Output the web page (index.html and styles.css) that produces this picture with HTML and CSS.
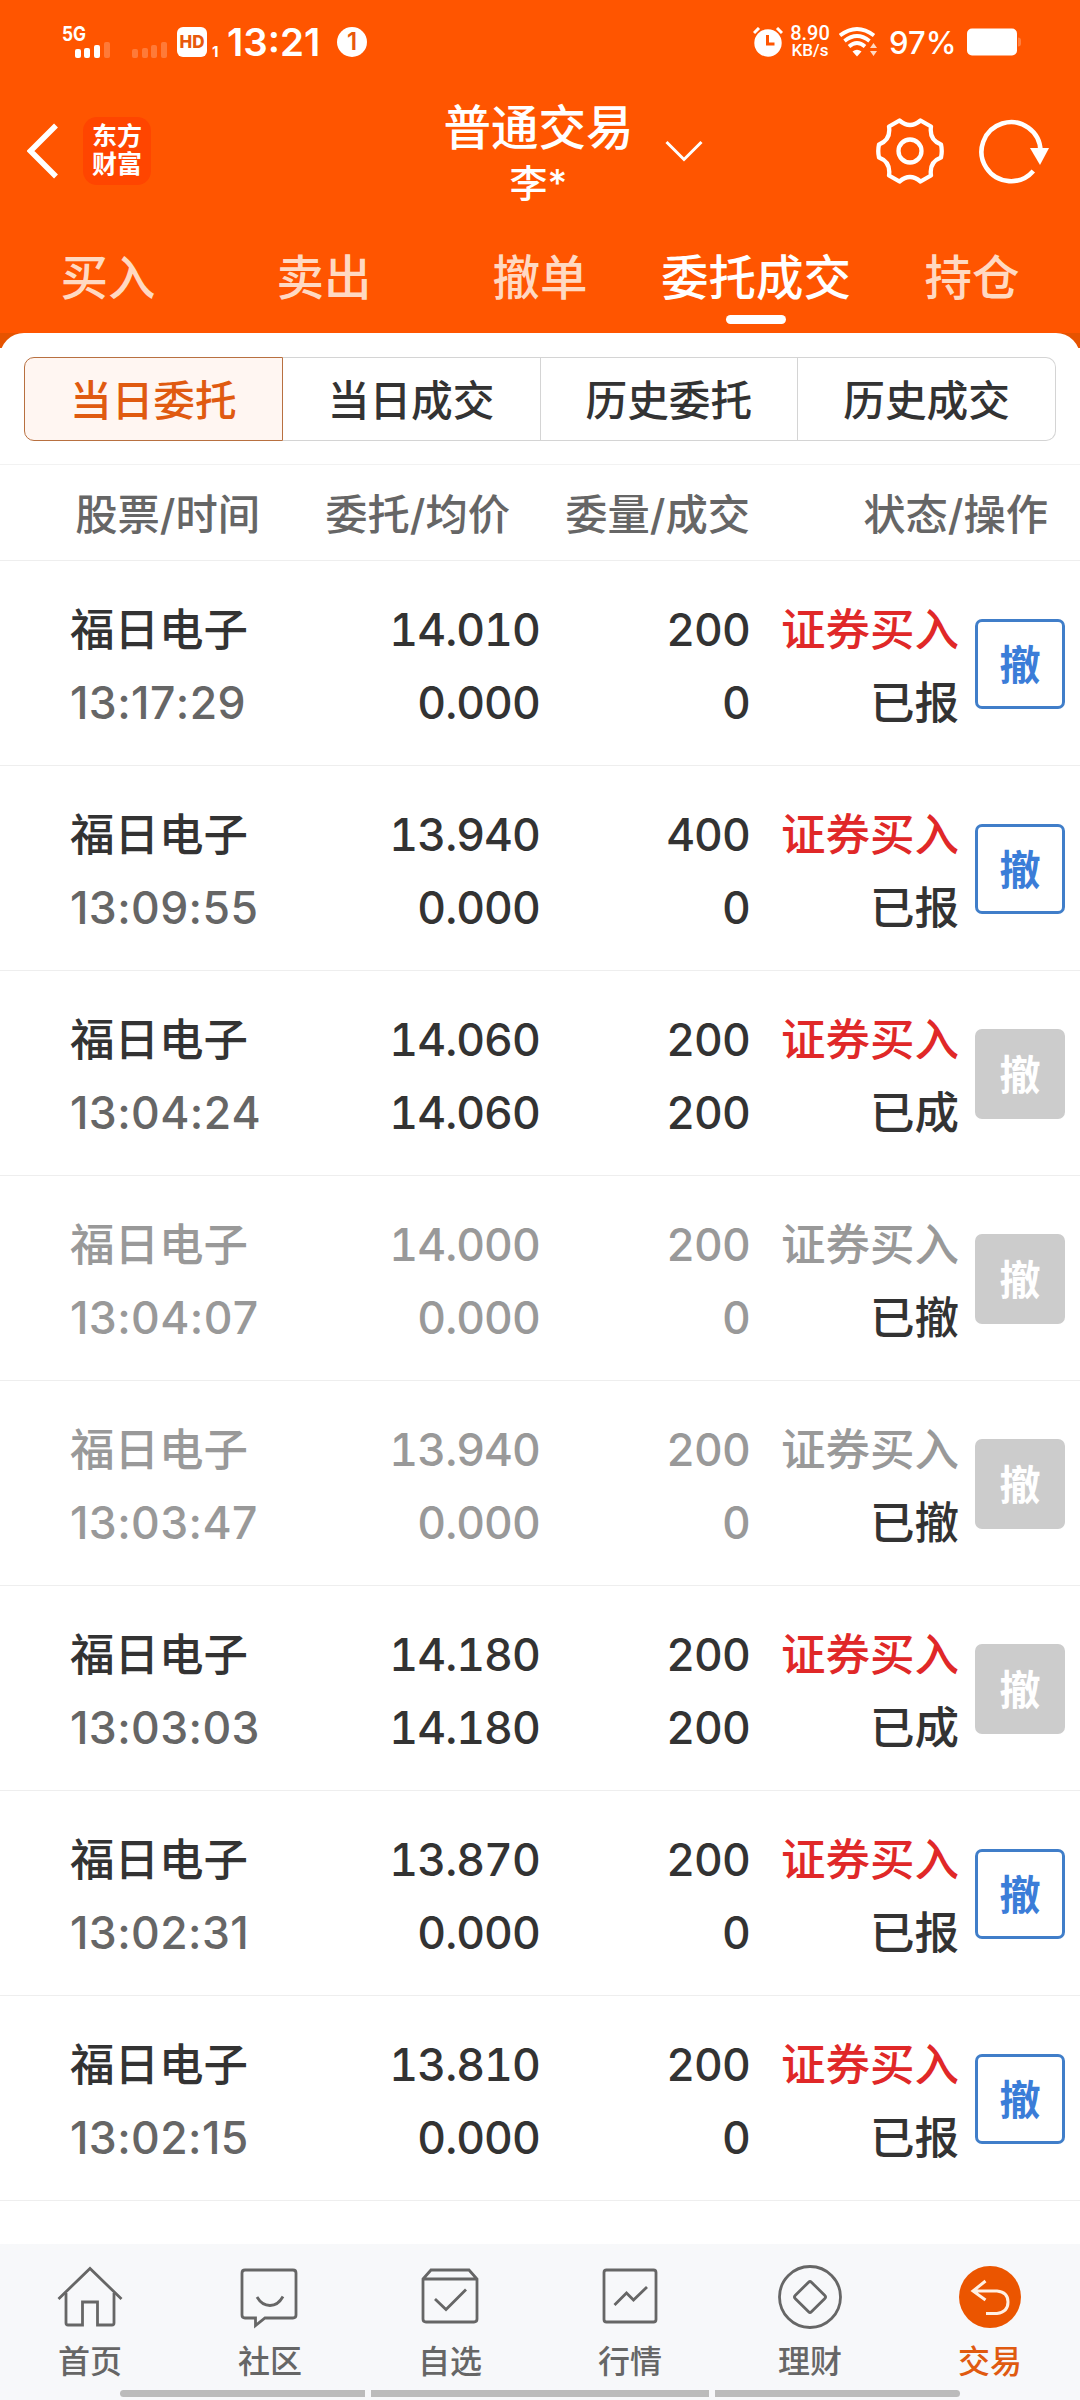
FILE: index.html
```html
<!DOCTYPE html>
<html lang="zh-CN">
    <head>
        <meta charset="utf-8">
        <title>普通交易</title>
        <link rel="stylesheet" href="styles.css">
    </head>
    <body>
        <header class="top">
            <div class="status-bar">
                <svg class="signal" width="110" height="36" viewBox="0 0 110 36">
                    <text class="net" x="0" y="17" textLength="24" lengthAdjust="spacingAndGlyphs">5G</text>
                    <g fill="#fff">
                        <rect x="13" y="25" width="6" height="9" rx="2"/>
                        <rect x="22" y="24" width="6" height="10" rx="2"/>
                        <rect x="32" y="21" width="6" height="13" rx="2"/>
                        <g opacity=".22">
                            <rect x="42" y="18" width="6" height="16" rx="2"/>
                            <rect x="70" y="25" width="6" height="9" rx="2"/>
                            <rect x="80" y="24" width="6" height="10" rx="2"/>
                            <rect x="89" y="21" width="6" height="13" rx="2"/>
                            <rect x="99" y="18" width="6" height="16" rx="2"/>
                        </g>
                    </g>
                </svg>
                <span class="hd">HD</span>
                <span class="sim">1</span>
                <span class="clock">13:21</span>
                <span class="notice">1</span>

                <div class="status-right">
                    <svg width="30" height="30" viewBox="0 0 30 30">
                        <circle cx="15" cy="16" r="13.7" fill="#fff"/>
                        <path d="M1 6l5-5M29 6l-5-5" stroke="#fff" stroke-width="3"/>
                        <path d="M14.5 8v9h7" fill="none" stroke="#ff5500" stroke-width="3"/>
                    </svg>
                    <div class="speed"><span>8.90</span><span class="unit">KB/s</span></div>
                    <svg class="wifi" width="40" height="30" viewBox="0 0 40 30">
                        <g fill="none" stroke="#fff" stroke-width="3.8">
                            <path d="M1 8.500Q18 -4.500 35 8.500"/>
                            <path d="M5.500 14Q18 4 30.500 14"/>
                            <path d="M10 19.500Q18 12.500 26 19.500"/>
                        </g>
                        <path d="M13.500 24.500Q18 21 22.500 24.500L18 29.500z" fill="#fff"/>
                        <path d="M31 21l3.500-5 3.500 5zM31 24l3.500 5 3.500-5z" fill="#ffd9c2"/>
                    </svg>
                    <span class="percent">97%</span>
                    <svg width="54" height="28" viewBox="0 0 54 28">
                        <rect x="0" y="0.500" width="50" height="27" rx="5" fill="#fff"/>
                        <path d="M51 9.500q3 0 3 3v3q0 3-3 3z" fill="#fff" opacity=".25"/>
                    </svg>
                </div>
            </div>

            <div class="title-bar">
                <div class="side">
                    <svg width="32" height="56" viewBox="0 0 32 56">
                        <path d="M29 2.500L3.500 28 29 53.500" fill="none" stroke="#fff" stroke-width="5.500"/>
                    </svg>
                    <div class="logo">东方<br>财富</div>
                </div>
                <div class="title">
                    <div class="title-main">普通交易</div>
                    <div class="title-sub">李*</div>
                </div>
                <div class="side side-right">
                    <svg class="arrow-down" width="38" height="22" viewBox="0 0 38 22">
                        <path d="M1.500 2L19 19.500 36.500 2" fill="none" stroke="#fff" stroke-width="3"/>
                    </svg>
                    <svg width="68" height="66" viewBox="0 0 68 66">
                        <g fill="none" stroke="#fff" stroke-width="4.300" stroke-linejoin="round">
                            <path d="M23.500 2.500Q34 11.500 44.500 2.500L55 8.500Q53 22 65 26.500Q66.500 33 65 39.500Q53 44 55 57.500L44.500 63.500Q34 54.500 23.500 63.500L13 57.500Q15 44 3 39.500Q1.500 33 3 26.500Q15 22 13 8.500Z"/>
                            <circle cx="34" cy="33" r="11.500"/>
                        </g>
                    </svg>
                    <svg class="refresh" width="72" height="66" viewBox="0 0 72 66">
                        <path d="M55.300 53A29.500 29.500 0 1 1 62.500 33" fill="none" stroke="#fff" stroke-width="4.600"/>
                        <path d="M52 30h19L62 47z" fill="#fff"/>
                    </svg>
                </div>
            </div>

            <nav class="tabs">
                <a class="tab">买入</a>
                <a class="tab">卖出</a>
                <a class="tab">撤单</a>
                <a class="tab active">委托成交</a>
                <a class="tab">持仓</a>
            </nav>
        </header>

        <main class="content">
            <div class="panel">
                <div class="segments">
                    <div class="segment active">当日委托</div>
                    <div class="segment">当日成交</div>
                    <div class="segment">历史委托</div>
                    <div class="segment">历史成交</div>
                </div>
            </div>

            <div class="row head">
                <div>股票/时间</div>
                <div>委托/均价</div>
                <div>委量/成交</div>
                <div>状态/操作</div>
            </div>

            <div class="row">
                <div class="stock">福日电子<br><span class="time">13:17:29</span></div>
                <div class="num">14.010<br>0.000</div>
                <div class="num">200<br>0</div>
                <div class="state"><span class="buy">证券买入</span><br>已报</div>
                <button class="cancel">撤</button>
            </div>
            <div class="row">
                <div class="stock">福日电子<br><span class="time">13:09:55</span></div>
                <div class="num">13.940<br>0.000</div>
                <div class="num">400<br>0</div>
                <div class="state"><span class="buy">证券买入</span><br>已报</div>
                <button class="cancel">撤</button>
            </div>
            <div class="row">
                <div class="stock">福日电子<br><span class="time">13:04:24</span></div>
                <div class="num">14.060<br>14.060</div>
                <div class="num">200<br>200</div>
                <div class="state"><span class="buy">证券买入</span><br>已成</div>
                <button class="cancel" disabled>撤</button>
            </div>
            <div class="row revoked">
                <div class="stock">福日电子<br><span class="time">13:04:07</span></div>
                <div class="num">14.000<br>0.000</div>
                <div class="num">200<br>0</div>
                <div class="state"><span class="buy">证券买入</span><br>已撤</div>
                <button class="cancel" disabled>撤</button>
            </div>
            <div class="row revoked">
                <div class="stock">福日电子<br><span class="time">13:03:47</span></div>
                <div class="num">13.940<br>0.000</div>
                <div class="num">200<br>0</div>
                <div class="state"><span class="buy">证券买入</span><br>已撤</div>
                <button class="cancel" disabled>撤</button>
            </div>
            <div class="row">
                <div class="stock">福日电子<br><span class="time">13:03:03</span></div>
                <div class="num">14.180<br>14.180</div>
                <div class="num">200<br>200</div>
                <div class="state"><span class="buy">证券买入</span><br>已成</div>
                <button class="cancel" disabled>撤</button>
            </div>
            <div class="row">
                <div class="stock">福日电子<br><span class="time">13:02:31</span></div>
                <div class="num">13.870<br>0.000</div>
                <div class="num">200<br>0</div>
                <div class="state"><span class="buy">证券买入</span><br>已报</div>
                <button class="cancel">撤</button>
            </div>
            <div class="row">
                <div class="stock">福日电子<br><span class="time">13:02:15</span></div>
                <div class="num">13.810<br>0.000</div>
                <div class="num">200<br>0</div>
                <div class="state"><span class="buy">证券买入</span><br>已报</div>
                <button class="cancel">撤</button>
            </div>
        </main>

        <footer class="bottom">
            <nav class="menu">
                <a class="item">
                    <svg class="icon" viewBox="0 0 66 66">
                        <path d="M1.500 34L33 3.500 64.500 34"/>
                        <path d="M9 28v30q0 2 2 2h14.500V37h15v23H55q2 0 2-2V28"/>
                    </svg>
                    首页
                </a>
                <a class="item">
                    <svg class="icon" viewBox="0 0 66 66">
                        <path d="M8 5h48q3 0 3 3v42q0 3-3 3H28l-9.500 7.500V53H8q-3 0-3-3V8q0-3 3-3z"/>
                        <path d="M20 32q5 8.500 13 8.500T46 31.500"/>
                    </svg>
                    社区
                </a>
                <a class="item">
                    <svg class="icon" viewBox="0 0 66 66">
                        <path d="M6 14l8-9h38l8 9v40q0 3-3 3H9q-3 0-3-3zM6 14h54"/>
                        <path d="M18 34l11 10.500L49 24.500"/>
                    </svg>
                    自选
                </a>
                <a class="item">
                    <svg class="icon" viewBox="0 0 66 66">
                        <rect x="7" y="5" width="52" height="52" rx="2.500"/>
                        <path d="M17.500 40l12-12 7 7L50 22"/>
                    </svg>
                    行情
                </a>
                <a class="item">
                    <svg class="icon" viewBox="0 0 66 66">
                        <circle cx="33" cy="32" r="30.500"/>
                        <rect x="21.500" y="20.500" width="23" height="23" rx="2" transform="rotate(45 33 32)"/>
                    </svg>
                    理财
                </a>
                <a class="item active">
                    <svg class="icon" viewBox="0 0 66 66">
                        <circle class="disc" cx="33" cy="32" r="31"/>
                        <path class="back" d="M28.500 16L16 26l12.500 9M16 26h24q11 1 11 11t-11 11.500H29"/>
                    </svg>
                    交易
                </a>
            </nav>
            <div class="handles">
                <span class="handle first"></span>
                <span class="handle middle"></span>
                <span class="handle last"></span>
            </div>
        </footer>
    </body>
</html>
```

FILE: styles.css
```css
* {
    box-sizing: border-box;
}
body {
    margin: 0;
    width: 1080px;
    height: 2400px;
    display: flex;
    flex-direction: column;
    overflow: hidden;
    background: #fff;
    color: #333;
    font-family: Inter, "Noto Sans CJK SC", sans-serif;
    font-weight: 500;
}

/* orange header */
.top {
    height: 333px;
    background: #ff5500;
    color: #fff;
}
.status-bar {
    height: 84px;
    padding: 0 59px 0 62px;
    display: flex;
    align-items: center;
}
.signal {
    overflow: visible;
}
.net {
    fill: #fff;
    font-size: 20px;
    font-weight: 700;
}
.hd {
    width: 30px;
    height: 30px;
    margin-left: 5px;
    border-radius: 6px;
    background: #fff;
    color: #e8590c;
    font-size: 17px;
    font-weight: 800;
    line-height: 30px;
    text-align: center;
}
.sim {
    margin: 18px 0 0 5px;
    width: 7px;
    font-size: 15px;
    font-weight: 700;
}
.clock {
    margin-left: 8px;
    width: 100px;
    font-size: 38.5px;
    font-weight: 600;
}
.notice {
    width: 30px;
    height: 30px;
    margin-left: 10px;
    border-radius: 50%;
    background: #fff;
    color: #e8590c;
    font-size: 24px;
    font-weight: 600;
    line-height: 30px;
    text-align: center;
}
.status-right {
    margin-left: auto;
    display: flex;
    align-items: center;
}
.speed {
    width: 42px;
    margin-left: 6px;
    display: flex;
    flex-direction: column;
    align-items: center;
    font-family: Roboto, sans-serif;
    font-size: 20px;
    line-height: 17px;
}
.unit {
    font-size: 17px;
}
.wifi {
    margin-left: 8px;
}
.percent {
    margin: 0 13px 0 10px;
    font-size: 31px;
    width: 65px;
}

.title-bar {
    height: 134px;
    padding: 0 30px 0 27px;
    display: grid;
    grid-template-columns: 1fr 200px 1fr;
    align-items: center;
}
.side {
    display: flex;
    align-items: center;
}
.logo {
    width: 68px;
    height: 68px;
    margin-left: 24px;
    padding-top: 5px;
    border-radius: 14px;
    background: #ff4500;
    font-size: 25px;
    font-weight: 700;
    line-height: 28px;
    text-align: center;
}
.title {
    padding-top: 8px;
    text-align: center;
}
.title-main {
    font-size: 47.5px;
    line-height: 56px;
}
.title-sub {
    font-size: 38px;
    line-height: 55px;
}
.side-right {
    justify-content: flex-end;
}
.arrow-down {
    margin-right: auto;
    margin-left: 26px;
}
.refresh {
    margin-left: 34px;
}

.tabs {
    height: 115px;
    display: flex;
}
.tab {
    position: relative;
    flex: 1;
    color: #ffd9c2;
    font-size: 47.5px;
    line-height: 120px;
    text-align: center;
}
.tab.active {
    color: #fff;
}
.tab.active::after {
    content: "";
    position: absolute;
    left: 78px;
    bottom: 9px;
    width: 60px;
    height: 9px;
    border-radius: 5px;
    background: #fff;
}

/* order list */
.content {
    flex: 1;
    background: linear-gradient(#e65300 15px, #fff 15px);
}
.panel {
    height: 132px;
    padding: 24px 24px 0;
    border-bottom: 1px solid #f2f2f2;
    border-radius: 24px 24px 0 0;
    background: #fff;
}
.segments {
    height: 84px;
    display: flex;
}
.segment {
    flex: 1;
    border: 1px solid #d4d4d4;
    font-size: 41.7px;
    line-height: 87px;
    text-align: center;
}
.segment + .segment {
    border-left-width: 0;
}
.segment:first-child {
    border-radius: 10px 0 0 10px;
}
.segment:last-child {
    border-radius: 0 10px 10px 0;
}
.segment.active {
    border-color: #b87040;
    background: #fff6f2;
    color: #e05a10;
}

.row {
    height: 205px;
    padding: 33px 15px 0 70px;
    display: grid;
    grid-template-columns: 200px 270px 210px 209px 106px;
    border-bottom: 1px solid #eee;
    font-size: 44.5px;
    line-height: 73px;
    text-align: right;
}
.row.head {
    height: 96px;
    padding: 0 32px 0 75px;
    grid-template-columns: 185px 250px 240px 298px;
    color: #666;
    font-size: 42.3px;
    line-height: 100px;
}
.row .stock {
    text-align: left;
}
.num {
    font-variant-numeric: tabular-nums;
    letter-spacing: -0.9px;
}
.time {
    color: #666;
    font-kerning: none;
    letter-spacing: 0.4px;
}
.buy {
    color: #e02828;
}
.cancel {
    width: 90px;
    height: 90px;
    margin: 25px 0 0 16px;
    padding: 0;
    border: 3px solid #407ec9;
    border-radius: 7px;
    background: #fff;
    color: #3b7dd8;
    font: inherit;
    font-size: 41px;
    font-weight: 700;
    line-height: 86px;
}
.cancel:disabled {
    border-color: #ccc;
    background: #ccc;
    color: #fff;
}
.revoked,
.revoked .time,
.revoked .buy {
    color: #999;
}
.revoked .state {
    color: #333;
}

/* bottom menu */
.bottom {
    height: 156px;
    background: #f7f8fa;
}
.menu {
    height: 146px;
    display: flex;
}
.item {
    flex: 1;
    display: flex;
    flex-direction: column;
    align-items: center;
    padding-top: 21px;
    color: #666;
    font-size: 32px;
    line-height: 61px;
}
.item.active {
    color: #e05a10;
}
.icon {
    width: 66px;
    height: 66px;
    flex: none;
    fill: none;
    stroke: #666;
    stroke-width: 2.8;
}
.icon .disc {
    fill: #eb5500;
    stroke: none;
}
.icon .back {
    stroke: #fff0e4;
    stroke-width: 3;
}
.handles {
    display: flex;
    justify-content: center;
    gap: 6px;
}
.handle {
    width: 245px;
    height: 7px;
    background: #bbb;
}
.handle.first {
    border-radius: 4px 0 0 4px;
}
.handle.middle {
    width: 338px;
}
.handle.last {
    border-radius: 0 4px 4px 0;
}
```
